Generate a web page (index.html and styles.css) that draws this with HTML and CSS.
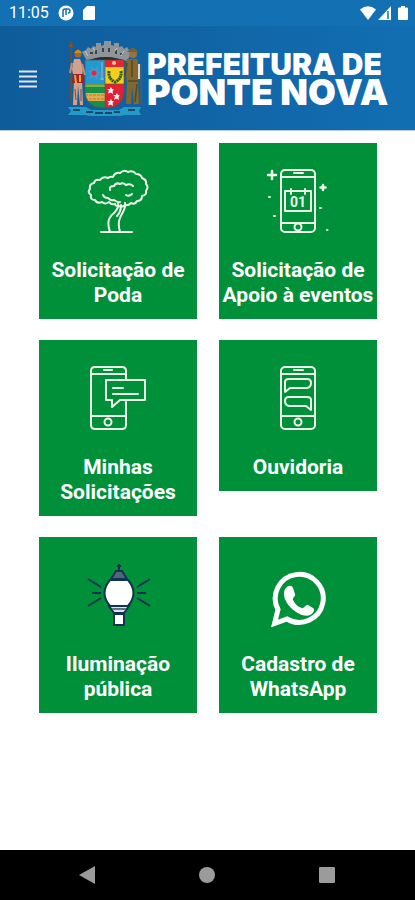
FILE: index.html
```html
<!DOCTYPE html>
<html lang="pt-BR">
<head>
    <meta charset="UTF-8">
    <meta name="viewport" content="width=device-width, initial-scale=1.0">
    <title>Prefeitura de Ponte Nova</title>
    <link rel="stylesheet" href="styles.css">
</head>
<body>
    <div class="status-bar">
        <span class="time">11:05</span>
        <svg class="status-icon" width="16" height="16" viewBox="0 0 16 16">
            <circle cx="8" cy="8" r="7.5" fill="#fff"/>
            <path d="M5 12V6q0-2 2-2h1M8 10V4h2q2 0 2 2t-2 2" fill="none" stroke="#1270b3" stroke-width="1.500"/>
        </svg>
        <svg class="status-icon" width="12" height="14" viewBox="0 0 12 14">
            <path d="M4 0h7q1 0 1 1v12q0 1-1 1H1q-1 0-1-1V4z" fill="#fff"/>
        </svg>
        <div class="status-right">
            <svg width="16" height="14" viewBox="0 0 16 14"><path d="M0 3.500Q8-3 16 3.500L8 14z" fill="#fff"/></svg>
            <svg width="14" height="14" viewBox="0 0 14 14"><path d="M0 14L13 0v14z" fill="#fff"/><path d="M10 5v8" stroke="#1270b3" stroke-width="1.500"/></svg>
            <svg class="battery" width="10" height="14" viewBox="0 0 10 14"><path d="M3 0h4v1.500h2q1 0 1 1V13q0 1-1 1H1q-1 0-1-1V2.500q0-1 1-1h2z" fill="#fff"/></svg>
        </div>
    </div>
    <header>
        <button class="menu" type="button" aria-label="Menu">
            <svg width="18" height="18" viewBox="0 0 18 18" stroke="#dfe6f4" stroke-width="1.800"><path d="M0 1.500h18M0 6.500h18M0 11.500h18M0 16.500h18"/></svg>
        </button>
        <svg class="crest" width="76" height="76" viewBox="7 6 76 76">
            <!-- crown -->
            <path d="M27 26L22 17l4-2 2-3 3 2 2-3 3 1V8h5v3l3-1V6h7v4l3 1V8h5v4l3-1 2 3 3-2 2 3 3 2-5 9Q45 18 27 26z" fill="#8f9499"/>
            <path d="M27 26Q45 18 64 26l-2 3H29z" fill="#252b32"/>
            <path d="M30 18h3M36 15v4M43 13v4M49 13v4M56 15v4M60 19h3" stroke="#3b434a" stroke-width="2"/>
            <path d="M25 16l3 5M64 16l-3 5M33 13l2 3M57 13l-2 3" stroke="#c2c5c7"/>
            <!-- shield -->
            <clipPath id="shield"><path d="M25 25h39v30q0 18-19.500 18T25 55z"/></clipPath>
            <g clip-path="url(#shield)">
                <path d="M25 25h20v25H25z" fill="#2199d2"/>
                <path d="M45 25h20v7H45z" fill="#e7252f"/>
                <path d="M45 32h20v17H45z" fill="#f4d01c"/>
                <path d="M25 50h20v25H25z" fill="#169148"/>
                <path d="M25 48h20v4H25z" fill="#72b64a"/>
                <path d="M25 58h20v8H25z" fill="#dfad4f"/>
                <path d="M25 60h20M25 64h20" stroke="#b87b3b" stroke-dasharray="3 1"/>
                <path d="M45 49h20v26H45z" fill="#e31f36"/>
            </g>
            <path d="M31 31l4 3 3-3v5l4 2-4 2v5l-4-3-5 2 2-5-3-3 4-1z" fill="#5b91bf"/>
            <circle cx="34" cy="38" r="2.500" fill="#dc2946"/>
            <path d="M42 27v18M40 44h4" stroke="#9bbad0"/>
            <path d="M49 36q-1 8 6 11 7-3 6-11" fill="none" stroke="#315b19" stroke-width="3" stroke-dasharray="2 .5"/>
            <circle cx="54" cy="28" r="2" fill="#f3b8a7"/>
            <g fill="#fff">
                <path id="star" d="M51 52l1 2 2 .5-1.500 1.500.5 3-2-1.500-3 1 1-3-2-1.500h3z"/>
                <use href="#star" x="6" y="6"/>
                <use href="#star" x="0" y="12"/>
            </g>
            <path d="M25 25h39v30q0 18-19.500 18T25 55zM45 25v48M25 49h39" fill="none" stroke="#6d5030" stroke-width=".7"/>
            <!-- bearer with the spear -->
            <path d="M11 14v54M9 12l2-5 2 5z" stroke="#754d30" stroke-width="1.500" fill="#83664f"/>
            <path d="M14 24h6l3 8-1 12 1 26h-3l-2-20-1 20h-4l1-26-2-10z" fill="#d3a08b"/>
            <path d="M12 28l-2 10M22 29l3 11" stroke="#c38e77" stroke-width="2"/>
            <circle cx="18" cy="19" r="3.500" fill="#a16832"/>
            <path d="M14 18q4-7 8 0" fill="#d18c1e"/>
            <path d="M13 39h10l1 9H12z" fill="#a62027"/>
            <path d="M15 40l1 8M20 40v7" stroke="#e2aa34" stroke-width="2"/>
            <path d="M15 54l1 11M21 54v12" stroke="#754d42"/>
            <!-- bearer in uniform -->
            <path d="M67 24h10l3 12-2 11 1 22h-5l-2-18-1 18h-5l1-22-2-12z" fill="#84672c"/>
            <circle cx="73" cy="19" r="4" fill="#99723c"/>
            <path d="M67 17q6-8 11 0z" fill="#75643b"/>
            <path d="M67 28l-2 13M72 25v17M68 46h10M77 49l-2 18" stroke="#524a25" stroke-width="1.500"/>
            <path d="M79 29v15" stroke="#d4d8d6" stroke-width="2"/>
            <path d="M81 29v41" stroke="#765740" stroke-width="1"/>
            <!-- ribbon -->
            <path d="M8 72h18l5 3h28l5-3h17l-2 4 2 4H65l-5 1H30l-5-1H8l3-4z" fill="#249bc7"/>
            <path d="M13 75h7M26 77h7M35 78h8M45 78h7M54 77h6M68 75h7" stroke="#164968" stroke-width="2"/>
        </svg>
        <h1>
            <span class="line-1">PREFEITURA DE</span>
            <span class="line-2">PONTE NOVA</span>
        </h1>
    </header>
    <main>
        <a class="card" href="#poda">
            <svg width="64" height="64" viewBox="0 0 64 64" fill="none" stroke="#edf8e9" stroke-width="2" stroke-linecap="round" stroke-linejoin="round">
                <path d="M29 35q-4 1-6-2-4 3-7 0-5 2-7-2-5 0-4-5-4-3-1-6-1-5 4-6 1-4 6-3 3-4 8-2 2-2 5-1 2-5 7-4 4-4 8-1 5-2 8 2 5 0 6 4 5 2 4 6 3 3 0 7 1 4-4 5 0 5-5 5-2 4-6 2-3 3-6 2-3 3-6 1-3 1-4-2"/>
                <path d="M24 21q-1-4 4-4 2-4 6-2 3-2 6 1 4-2 7 1M17 26q1 3 5 3 3 3 6 2 4 3 6 2M40 26q3 2 6-1"/>
                <path d="M24 63c-4-12 0-16 5-20q4-5 3-8M34 63c-3-10 0-15 3-20 2-4 3-7 2-9M35 36q0 7-4 11M15 63h31"/>
            </svg>
            <span>Solicitação de Poda</span>
        </a>
        <a class="card" href="#eventos">
            <svg width="64" height="64" viewBox="0 0 64 64" fill="none" stroke="#edf8e9" stroke-width="2" stroke-linecap="round" stroke-linejoin="round">
                <rect x="15" y="1" width="34" height="62" rx="4"/>
                <path d="M15 8h34M15 54h34M28 4h9"/>
                <circle cx="32" cy="58" r="3.500"/>
                <path d="M19 22h26v20H19zM25 20v5M39 20v5"/>
                <path d="M6 2v8M2 6h8M57 16v5M54.500 18.500h5" stroke-width="2.500"/>
                <path d="M3 28h1M8 47h1M54 39h1M61 61h.5" stroke-width="2"/>
                <text x="32" y="38" text-anchor="middle" class="day">01</text>
            </svg>
            <span>Solicitação de Apoio à eventos</span>
        </a>
        <a class="card" href="#solicitacoes">
            <svg width="64" height="64" viewBox="0 0 64 64" fill="none" stroke="#edf8e9" stroke-width="2" stroke-linecap="round" stroke-linejoin="round">
                <path d="M40 13V5q0-4-4-4H9Q5 1 5 5v54q0 4 4 4h27q4 0 4-4V36"/>
                <path d="M5 8h35M5 50h35M18 4h8"/>
                <circle cx="22" cy="56" r="3.500"/>
                <path d="M20 14h39v20H34l-8 7v-7h-6zM27 22h10M27 28h25"/>
            </svg>
            <span>Minhas Solicitações</span>
        </a>
        <a class="card" href="#ouvidoria">
            <svg width="64" height="64" viewBox="0 0 64 64" fill="none" stroke="#edf8e9" stroke-width="2" stroke-linecap="round" stroke-linejoin="round">
                <rect x="15" y="1" width="34" height="62" rx="4"/>
                <path d="M15 8h34M15 50h34M28 4h9"/>
                <circle cx="32" cy="56" r="3.500"/>
                <path d="M19 26V16q0-3 4-3h18q4 0 4 4t-4 5H24zM45 44V34q0-3-4-3H23q-4 0-4 4t4 5h17z"/>
            </svg>
            <span>Ouvidoria</span>
        </a>
        <a class="card" href="#iluminacao">
            <svg width="64" height="64" viewBox="0 0 64 64" fill="none" stroke="#12334f" stroke-width="2">
                <path d="M33 1v7M31 3h4"/>
                <path d="M30 8h6l5 8H25z" fill="#53657d"/>
                <path d="M24 17h18q11 13 0 26H24q-11-13 0-26z" fill="#fff"/>
                <path d="M25 16h16M23 43h20l-5 7H28z" fill="#dce3e7"/>
                <path d="M26 46h14" stroke="#61738a"/>
                <path d="M28 51h10v11H28z" fill="#fff"/>
                <path d="M2 16l13 8M6 30h9M2 43l13-8M64 16l-13 8M60 30h-9M64 43l-13-8"/>
            </svg>
            <span>Iluminação pública</span>
        </a>
        <a class="card" href="#whatsapp">
            <svg width="64" height="64" viewBox="0 0 64 64">
                <path d="M8.500 60.500l3.500-14a24 24 0 1 1 9 9.500z" fill="none" stroke="#fff" stroke-width="5"/>
                <path d="M20 25c2-3 6-3 7 0l2 6c1 2-3 4-2 6 2 4 5 7 9 8 2 1 4-4 6-3l5 3c2 1 1 5-3 7-8 4-26-9-26-21 0-2 0-4 2-6z" fill="#fff"/>
            </svg>
            <span>Cadastro de WhatsApp</span>
        </a>
    </main>
    <nav class="nav-bar">
        <button type="button" aria-label="Voltar"><svg width="18" height="18" viewBox="0 0 18 18"><path d="M1 9L17 0v18z" fill="#9b9b9b"/></svg></button>
        <button type="button" aria-label="Início"><svg width="18" height="18" viewBox="0 0 18 18"><circle cx="9" cy="9" r="8" fill="#9b9b9b"/></svg></button>
        <button type="button" aria-label="Recentes"><svg width="18" height="18" viewBox="0 0 18 18"><rect x="1" y="1" width="16" height="16" rx="1" fill="#9b9b9b"/></svg></button>
    </nav>
</body>
</html>
```

FILE: styles.css
```css
* {
    box-sizing: border-box;
}
body {
    font-family: Roboto, sans-serif;
    background-color: #fff;
    margin: 0;
    display: flex;
    flex-direction: column;
    min-height: 100vh;
}
svg {
    display: block;
}
button {
    background: none;
    border: 0;
    padding: 0;
}
.status-bar {
    display: flex;
    align-items: center;
    height: 26px;
    padding: 0 7px 0 9px;
    background-color: #1270b3;
    color: #fff;
}
.time {
    font-size: 16px;
    line-height: 26px;
}
.status-icon {
    margin-left: 9px;
}
.status-right {
    display: flex;
    gap: 2px;
    margin-left: auto;
}
.battery {
    margin-left: 4px;
}
header {
    display: flex;
    align-items: center;
    height: 105px;
    padding: 2px 0 0 19px;
    background: linear-gradient(90deg, #0f5c9a, #126eb2);
    border-bottom: 1px solid #b5cbe2;
}
.crest {
    margin-left: 30px;
}
h1 {
    margin: 0 0 0 4px;
    color: #fff;
    font-family: Inter, sans-serif;
    font-weight: 900;
    white-space: nowrap;
}
h1 span {
    display: block;
}
.line-1 {
    font-size: 30px;
    line-height: 26px;
}
.line-2 {
    font-size: 36px;
    line-height: 30px;
}
main {
    flex: 1;
    display: grid;
    grid-template-columns: 1fr 1fr;
    align-content: start;
    align-items: start;
    gap: 21px 22px;
    padding: 12px 38px 24px 39px;
}
.card {
    display: flex;
    flex-direction: column;
    align-items: center;
    gap: 25px;
    padding: 26px 2px 11px;
    background-color: #00903a;
    color: #fff;
    font-size: 21px;
    font-weight: bold;
    line-height: 25px;
    text-align: center;
    text-decoration: none;
}
.day {
    fill: #edf8e9;
    stroke: none;
    font-size: 14px;
}
.nav-bar {
    display: flex;
    justify-content: space-between;
    align-items: center;
    height: 50px;
    padding: 0 79px 0 78px;
    background-color: #000;
}
```
